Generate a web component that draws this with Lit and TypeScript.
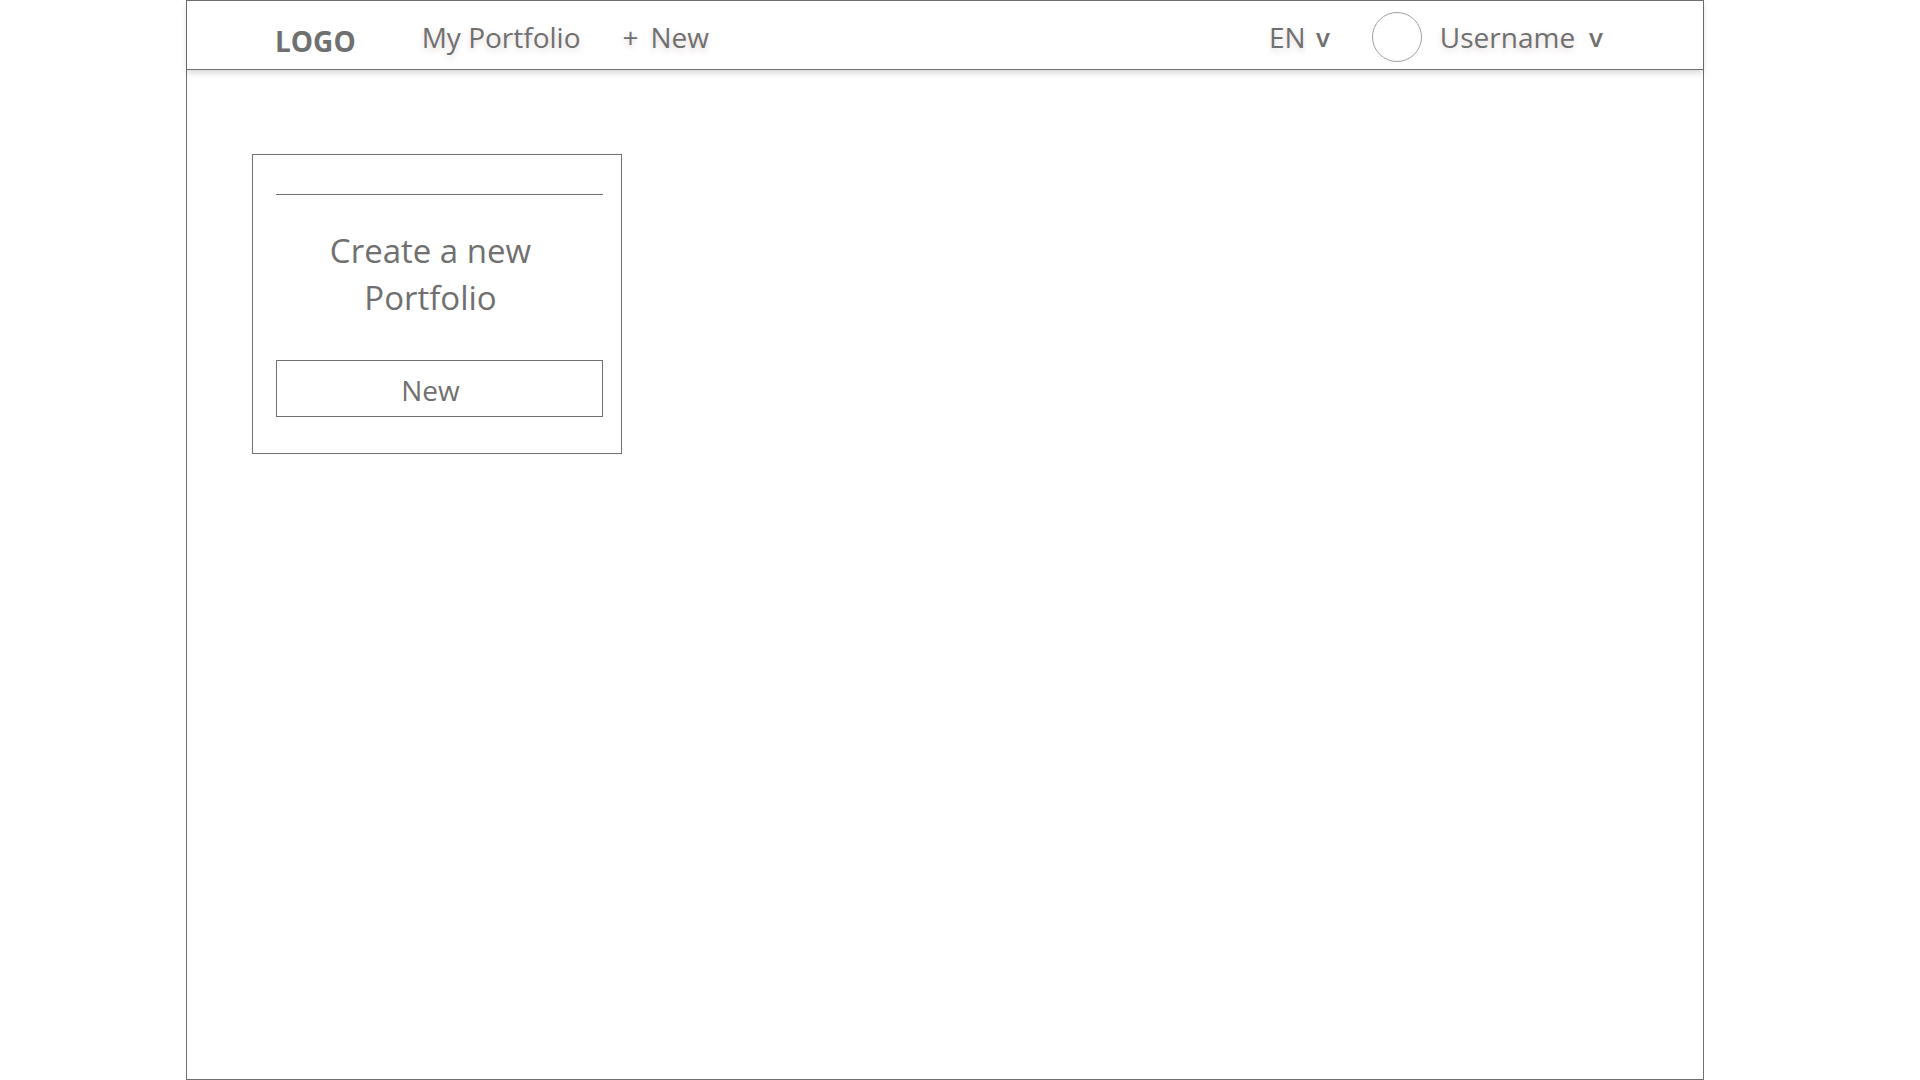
import { LitElement, html, css } from "lit";
import { customElement } from "lit/decorators.js";

@customElement("app-header")
class AppHeader extends LitElement {
  static styles = css`
    :host {
      display: block;
      position: relative;
    }
    .bar {
      box-sizing: border-box;
      display: flex;
      align-items: center;
      height: 69px;
      padding: 4px 100px 0 88px;
      border-bottom: 1px solid #707070;
      background: #fff;
      box-shadow: 0 3px 6px rgba(0, 0, 0, 0.16);
    }
    a,
    button,
    select,
    .caret {
      margin: 0;
      padding: 0;
      border: 0;
      background: none;
      color: #707070;
      font: 400 28px/40px "Segoe UI", "Open Sans", "Noto Sans", sans-serif;
      text-decoration: none;
      white-space: pre;
      cursor: pointer;
    }
    nav a,
    button,
    select {
      text-shadow: 0 3px 6px rgba(90, 30, 30, 0.18);
    }
    a.logo {
      padding-top: 8px;
      font-weight: 700;
    }
    nav {
      display: flex;
      gap: 42px;
      margin-left: 66px;
    }
    .add {
      display: flex;
      gap: 12px;
    }
    .tools {
      display: flex;
      align-items: center;
      margin-left: auto;
    }
    .language {
      display: flex;
      gap: 10px;
    }
    select {
      appearance: none;
      height: 40px;
    }
    .caret {
      font-weight: 600;
      font-size: 26px;
      text-shadow: none;
    }
    .avatar {
      box-sizing: border-box;
      width: 50px;
      height: 50px;
      margin: 0 18px 0 42px;
      border: 1px solid #a0a0a0;
      border-radius: 50%;
    }
    .user {
      display: flex;
      gap: 14px;
    }
  `;

  render() {
    return html`
      <header class="bar">
        <a class="logo" href="#">LOGO</a>
        <nav>
          <a href="#portfolio">My Portfolio</a>
          <a class="add" href="#new"><span>+</span><span>New</span></a>
        </nav>
        <div class="tools">
          <label class="language">
            <select aria-label="Language">
              <option>EN</option>
            </select>
            <span class="caret">v</span>
          </label>
          <span class="avatar"></span>
          <button class="user" type="button" aria-haspopup="menu">
            <span>Username</span><span class="caret">v</span>
          </button>
        </div>
      </header>
    `;
  }
}

@customElement("portfolio-card")
class PortfolioCard extends LitElement {
  static styles = css`
    :host {
      display: block;
    }
    .card {
      box-sizing: border-box;
      padding: 39px 18px 36px 23px;
      border: 1px solid #707070;
      color: #707070;
      font-family: "Segoe UI", "Open Sans", "Noto Sans", sans-serif;
    }
    hr {
      height: 1px;
      margin: 0 0 32px;
      border: 0;
      background: #707070;
    }
    h2 {
      margin: 0 0 39px;
      padding: 0 18px 0 0;
      font-size: 33px;
      font-weight: 400;
      line-height: 47px;
      text-align: center;
    }
    button {
      box-sizing: border-box;
      display: block;
      width: 100%;
      height: 57px;
      padding: 2px 18px 0 0;
      border: 1px solid #707070;
      border-radius: 0;
      background: #fff;
      color: inherit;
      font: inherit;
      font-size: 28px;
      line-height: 40px;
      cursor: pointer;
    }
  `;

  render() {
    return html`
      <section class="card">
        <hr />
        <h2>Create a new<br />Portfolio</h2>
        <button type="button">New</button>
      </section>
    `;
  }
}

@customElement("app-root")
class AppRoot extends LitElement {
  static styles = css`
    :host {
      display: block;
      background: #fff;
    }
    .page {
      box-sizing: border-box;
      min-height: 100vh;
      margin: 0 216px 0 186px;
      border: 1px solid #707070;
    }
    main {
      display: grid;
      grid-template-columns: repeat(auto-fill, 370px);
      gap: 40px;
      padding: 84px 65px;
    }
  `;

  render() {
    return html`
      <div class="page">
        <app-header></app-header>
        <main><portfolio-card></portfolio-card></main>
      </div>
    `;
  }
}
